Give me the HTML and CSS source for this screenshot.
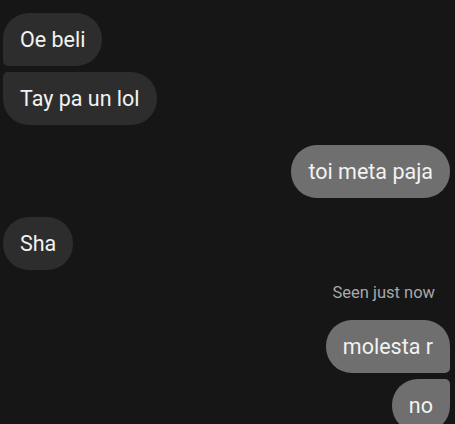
FILE: index.html
```html
<!DOCTYPE html>
<html>
<head>
<meta charset="utf-8">
<link rel="stylesheet" href="styles.css">
</head>
<body>
<div class="chat">
  <div class="row in"><div class="bubble in first">Oe beli</div></div>
  <div class="row in tight"><div class="bubble in last">Tay pa un lol</div></div>
  <div class="row out gap"><div class="bubble out">toi meta paja</div></div>
  <div class="row in gap2"><div class="bubble in">Sha</div></div>
  <div class="seen">Seen just now</div>
  <div class="row out seen-gap"><div class="bubble out first-out">molesta r</div></div>
  <div class="row out tight"><div class="bubble out last-out">no</div></div>
</div>
</body>
</html>
```
FILE: styles.css
```css
html, body {
  margin: 0;
  padding: 0;
  background: #161616;
  height: 100%;
  overflow: hidden;
}
.chat {
  display: flex;
  flex-direction: column;
  padding: 13px 5px 0 3px;
  font-family: Roboto, "Noto Sans", sans-serif;
}
.row {
  display: flex;
}
.row.in { justify-content: flex-start; }
.row.out { justify-content: flex-end; }
.row.tight { margin-top: 6px; }
.row.gap { margin-top: 20px; }
.row.gap2 { margin-top: 19px; }
.bubble {
  font-size: 21.5px;
  line-height: 25px;
  padding: 14px 17px;
  border-radius: 26px;
  color: #f2f2f2;
  white-space: nowrap;
}
.bubble.in { background: #2d2d2d; }
.bubble.out { background: #6f6f6f; }
.bubble.first { border-bottom-left-radius: 5px; }
.bubble.last { border-top-left-radius: 5px; }
.bubble.first-out { border-bottom-right-radius: 5px; }
.bubble.last-out { border-top-right-radius: 5px; }
.seen {
  margin-top: 13px;
  align-self: flex-end;
  margin-right: 15px;
  font-size: 16.5px;
  line-height: 20px;
  color: #a8a8a8;
}
.seen-gap { margin-top: 17px; }
```
